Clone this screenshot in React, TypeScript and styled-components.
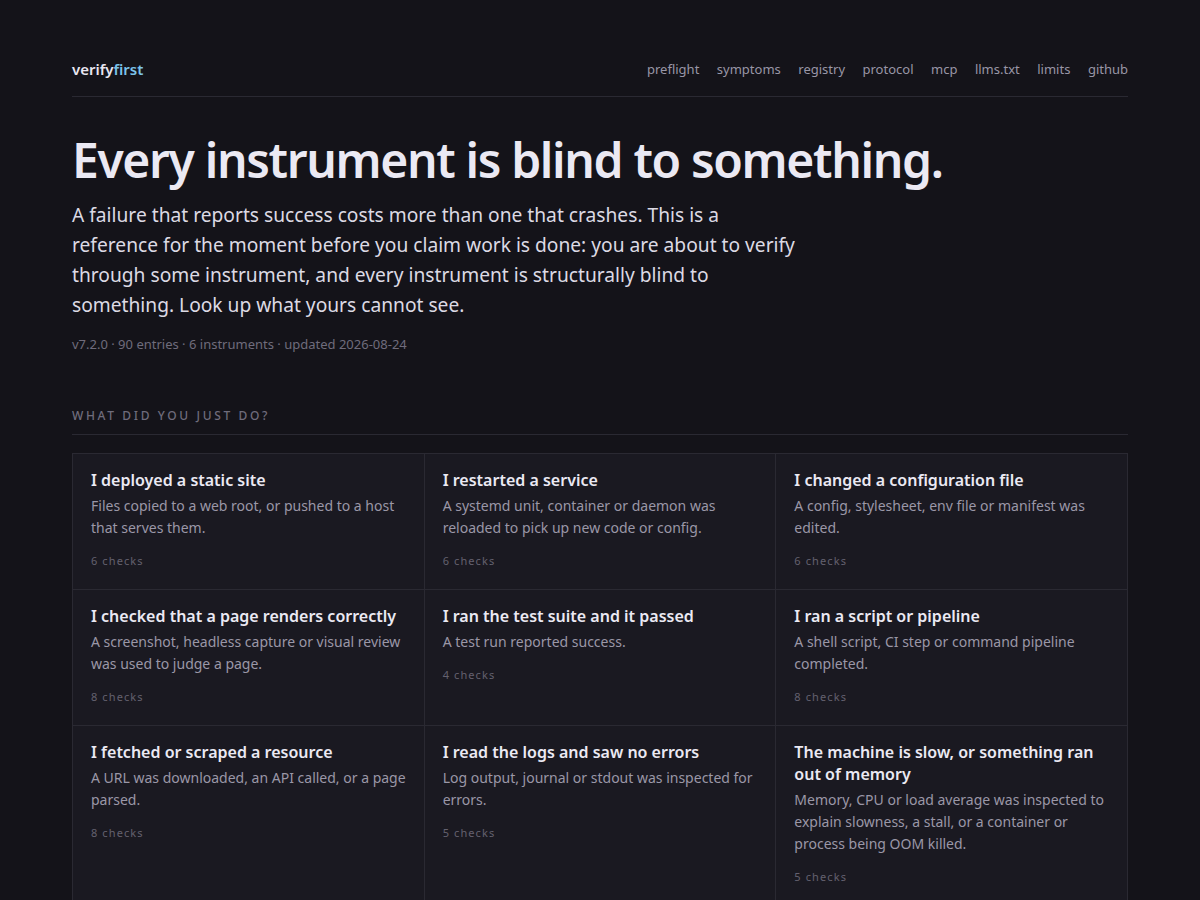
import React from 'react';
import styled, { createGlobalStyle } from 'styled-components';

const GlobalStyle = createGlobalStyle`
  html, body {
    margin: 0;
    padding: 0;
    background: #141319;
  }
  body {
    font-family: 'Noto Sans', 'Open Sans', sans-serif;
    color: #e4e2ec;
    -webkit-font-smoothing: antialiased;
  }
  * {
    box-sizing: border-box;
  }
`;

const Page = styled.div`
  max-width: 1056px;
  margin: 0 auto;
  padding: 57px 0 0;
`;

const Header = styled.header`
  display: flex;
  align-items: center;
  justify-content: space-between;
  height: 40px;
  padding-bottom: 16px;
  border-bottom: 1px solid #2a2932;
`;

const Logo = styled.a`
  font-size: 15px;
  font-weight: 600;
  color: #e8e6f0;
  text-decoration: none;

  span {
    color: #7cc3ea;
  }
`;

const Nav = styled.nav`
  display: flex;
  gap: 17.5px;
`;

const NavLink = styled.a`
  font-size: 13px;
  color: #9996a6;
  text-decoration: none;
`;

const Hero = styled.section`
  padding-top: 34px;
`;

const Title = styled.h1`
  margin: 0;
  font-size: 48px;
  font-weight: 600;
  line-height: 1.2;
  letter-spacing: -0.028em;
  color: #ebe9f3;
`;

const Lead = styled.p`
  margin: 11px 0 0;
  max-width: 730px;
  font-size: 19.2px;
  line-height: 30px;
  color: #dcdae4;
`;

const Meta = styled.p`
  margin: 15px 0 0;
  font-size: 13px;
  line-height: 18px;
  color: #6f6c7c;
`;

const SectionLabel = styled.h2`
  margin: 54px 0 0;
  padding-bottom: 10px;
  border-bottom: 1px solid #2a2932;
  font-size: 12px;
  line-height: 17px;
  font-weight: 500;
  letter-spacing: 0.22em;
  text-transform: uppercase;
  color: #6f6c7c;
`;

const Grid = styled.div`
  display: grid;
  grid-template-columns: repeat(3, 1fr);
  gap: 1px;
  margin-top: 18px;
  background: #2a2932;
  border: 1px solid #2a2932;
`;

const Card = styled.a`
  display: block;
  padding: 15px 18px 20px;
  background: #1a1921;
  text-decoration: none;
`;

const CardTitle = styled.h3`
  margin: 0;
  font-size: 16px;
  font-weight: 600;
  line-height: 22px;
  color: #ebe9f3;
`;

const CardText = styled.p`
  margin: 4px 0 0;
  font-size: 14px;
  line-height: 22px;
  color: #9a97a7;
`;

const Checks = styled.div`
  margin-top: 14px;
  font-size: 11px;
  line-height: 16px;
  letter-spacing: 0.1em;
  color: #64616f;
`;

const navItems = ['preflight', 'symptoms', 'registry', 'protocol', 'mcp', 'llms.txt', 'limits', 'github'];

const actions = [
  { title: 'I deployed a static site', text: 'Files copied to a web root, or pushed to a host that serves them.', checks: 6 },
  { title: 'I restarted a service', text: 'A systemd unit, container or daemon was reloaded to pick up new code or config.', checks: 6 },
  { title: 'I changed a configuration file', text: 'A config, stylesheet, env file or manifest was edited.', checks: 6 },
  { title: 'I checked that a page renders correctly', text: 'A screenshot, headless capture or visual review was used to judge a page.', checks: 8 },
  { title: 'I ran the test suite and it passed', text: 'A test run reported success.', checks: 4 },
  { title: 'I ran a script or pipeline', text: 'A shell script, CI step or command pipeline completed.', checks: 8 },
  { title: 'I fetched or scraped a resource', text: 'A URL was downloaded, an API called, or a page parsed.', checks: 8 },
  { title: 'I read the logs and saw no errors', text: 'Log output, journal or stdout was inspected for errors.', checks: 5 },
  {
    title: 'The machine is slow, or something ran out of memory',
    text: 'Memory, CPU or load average was inspected to explain slowness, a stall, or a container or process being OOM killed.',
    checks: 5
  }
];

const App = () => (
  <>
    <GlobalStyle />
    <Page>
      <Header>
        <Logo href="#">
          verify<span>first</span>
        </Logo>
        <Nav>
          {navItems.map(item => (
            <NavLink href="#" key={item}>
              {item}
            </NavLink>
          ))}
        </Nav>
      </Header>

      <Hero>
        <Title>Every instrument is blind to something.</Title>
        <Lead>
          A failure that reports success costs more than one that crashes. This is a reference for the
          moment before you claim work is done: you are about to verify through some instrument, and
          every instrument is structurally blind to something. Look up what yours cannot see.
        </Lead>
        <Meta>v7.2.0 · 90 entries · 6 instruments · updated 2026-08-24</Meta>
      </Hero>

      <SectionLabel>What did you just do?</SectionLabel>
      <Grid>
        {actions.map(a => (
          <Card href="#" key={a.title}>
            <CardTitle>{a.title}</CardTitle>
            <CardText>{a.text}</CardText>
            <Checks>{a.checks} checks</Checks>
          </Card>
        ))}
      </Grid>
    </Page>
  </>
);

export default App;
